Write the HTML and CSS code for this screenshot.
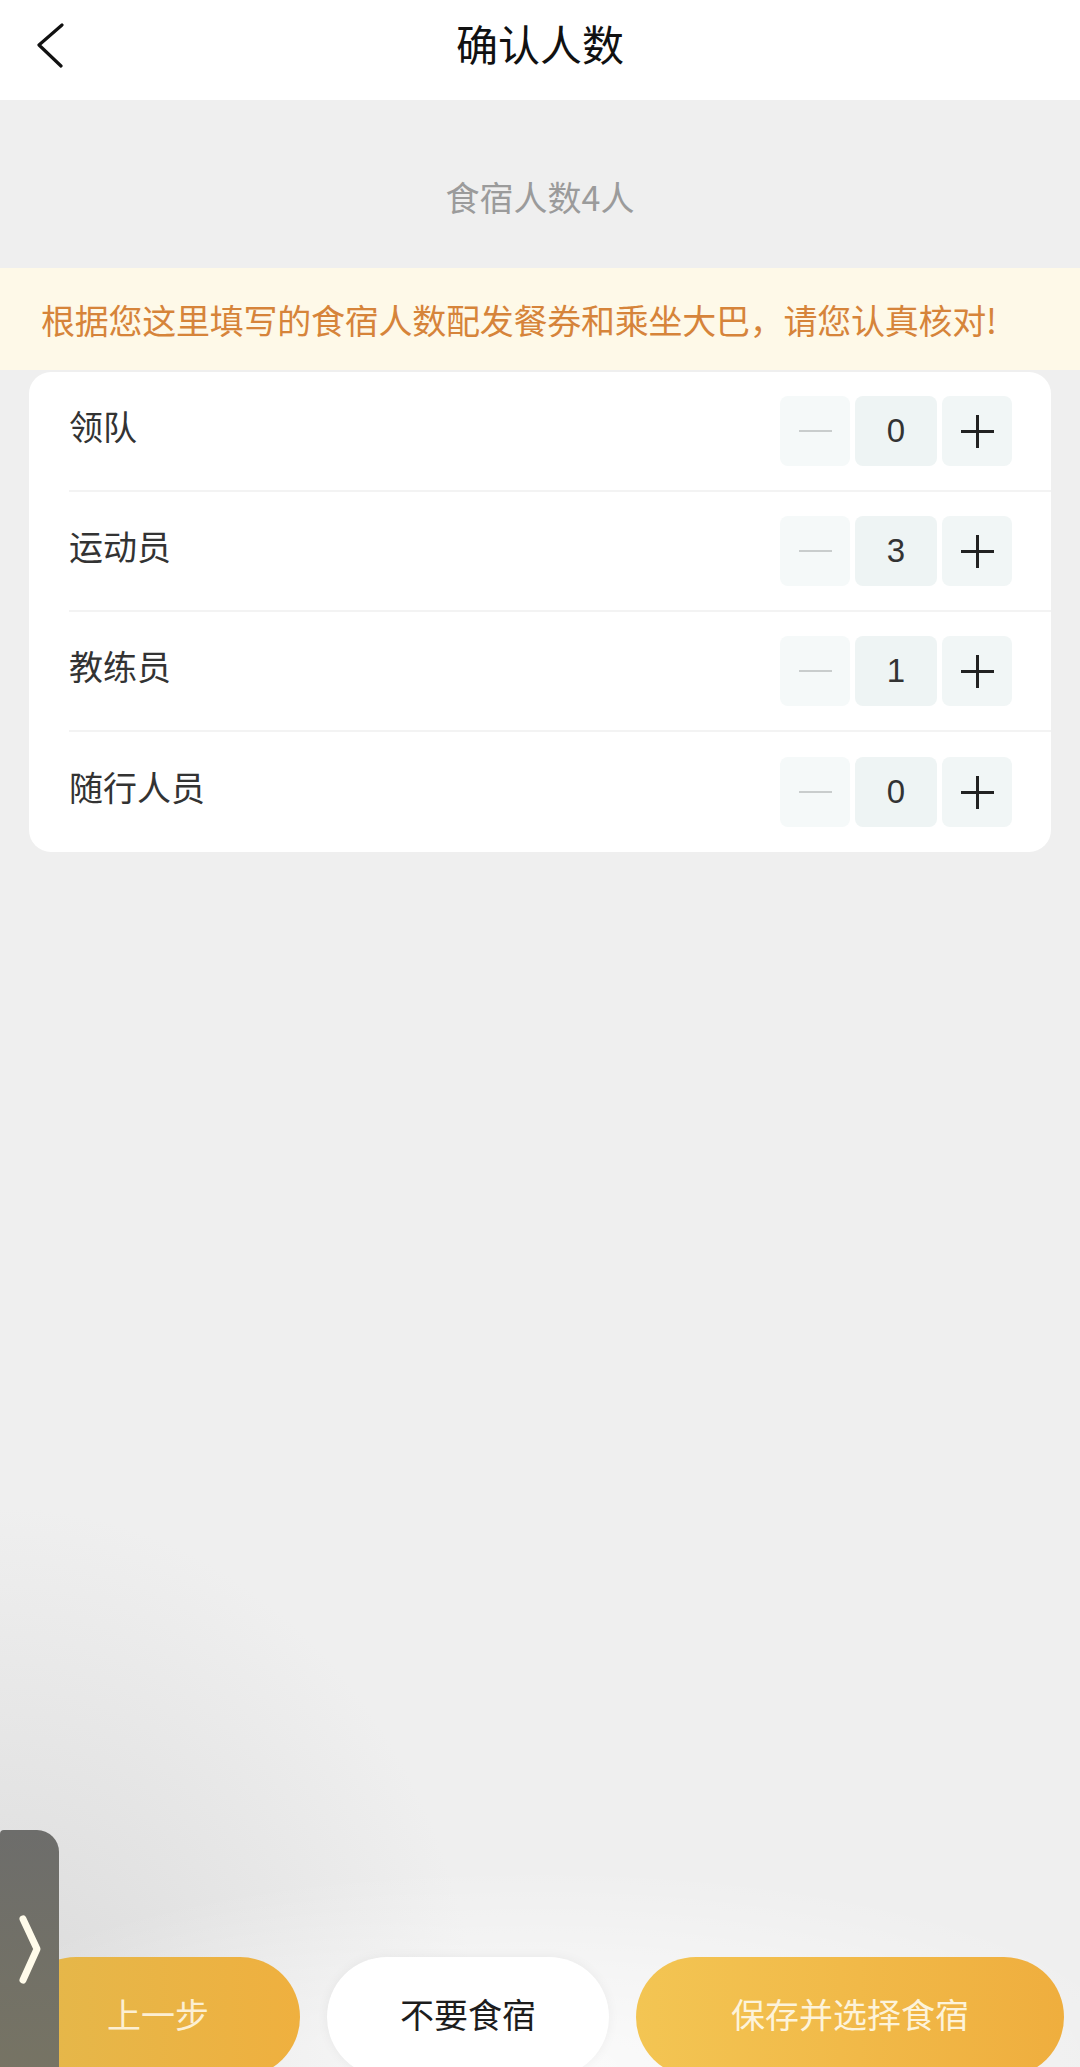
FILE: index.html
```html
<!DOCTYPE html>
<html>
  <head>
    <meta charset="utf-8" />
    <title>确认人数</title>
    <link rel="stylesheet" href="styles.css">
  </head>
  <body>
    <div class="page">
      <header class="nav">
        <div class="nav-back">
          <svg width="30" height="46" viewBox="0 0 30 46">
            <path d="M26 2 L3 22 L25 43" fill="none" stroke="#111" stroke-width="3.2" stroke-linecap="round" stroke-linejoin="round" />
          </svg>
        </div>
        <h1 class="nav-title">确认人数</h1>
        <div></div>
      </header>

      <div class="summary">食宿人数4人</div>

      <div class="notice">根据您这里填写的食宿人数配发餐券和乘坐大巴，请您认真核对!</div>

      <main class="content">
        <div class="card">
          <div class="row">
            <span class="row-label">领队</span>
            <div class="stepper">
              <span class="step step-minus"><i class="minus"></i></span>
              <span class="step-value">0</span>
              <span class="step step-plus"><i class="plus"></i></span>
            </div>
          </div>
          <div class="row">
            <span class="row-label">运动员</span>
            <div class="stepper">
              <span class="step step-minus"><i class="minus"></i></span>
              <span class="step-value">3</span>
              <span class="step step-plus"><i class="plus"></i></span>
            </div>
          </div>
          <div class="row">
            <span class="row-label">教练员</span>
            <div class="stepper">
              <span class="step step-minus"><i class="minus"></i></span>
              <span class="step-value">1</span>
              <span class="step step-plus"><i class="plus"></i></span>
            </div>
          </div>
          <div class="row">
            <span class="row-label">随行人员</span>
            <div class="stepper">
              <span class="step step-minus"><i class="minus"></i></span>
              <span class="step-value">0</span>
              <span class="step step-plus"><i class="plus"></i></span>
            </div>
          </div>
        </div>
      </main>

      <footer class="actions">
        <button class="btn btn-prev">上一步</button>
        <button class="btn btn-skip">不要食宿</button>
        <button class="btn btn-save">保存并选择食宿</button>
      </footer>

      <div class="side-tab">
        <svg width="26" height="72" viewBox="0 0 26 72">
          <path d="M6 5 L20 35 L6 66" fill="none" stroke="#fffbea" stroke-width="7" stroke-linecap="round" stroke-linejoin="round" />
        </svg>
      </div>
    </div>
  </body>
</html>
```

FILE: styles.css
```css
body {
  margin: 0;
  font-family: "Noto Sans CJK SC", "Noto Sans", sans-serif;
  background-color: #efefef;
}
.page {
  position: relative;
  height: 100vh;
  display: flex;
  flex-direction: column;
  overflow: hidden;
  background:
    radial-gradient(ellipse 620px 200px at 50% 100%, rgba(255, 255, 255, 0.75), rgba(255, 255, 255, 0)),
    radial-gradient(ellipse 480px 560px at 0 100%, #d9d9d9, rgba(239, 239, 239, 0)),
    #efefef;
}

/* top bar */
.nav {
  height: 100px;
  flex-shrink: 0;
  background-color: #fff;
  display: grid;
  grid-template-columns: 100px 1fr 100px;
  align-items: center;
}
.nav-back {
  padding-left: 36px;
  padding-bottom: 8px;
  display: flex;
}
.nav-title {
  margin: 0;
  padding-bottom: 14px;
  text-align: center;
  font-size: 42px;
  font-weight: 400;
  color: #111;
  line-height: 50px;
}

.summary {
  flex-shrink: 0;
  height: 168px;
  box-sizing: border-box;
  padding-top: 76px;
  text-align: center;
  font-size: 34px;
  line-height: 42px;
  color: #9b9b9b;
}
.notice {
  flex-shrink: 0;
  height: 102px;
  box-sizing: border-box;
  padding-left: 41px;
  display: flex;
  align-items: center;
  background-color: #fef9e8;
  font-size: 34px;
  letter-spacing: -0.25px;
  color: #d6843a;
  white-space: nowrap;
}

/* people card */
.content {
  flex: 1;
  padding: 2px 29px 0;
}
.card {
  background-color: #fff;
  border-radius: 22px;
  overflow: hidden;
}
.row {
  height: 120px;
  box-sizing: border-box;
  margin-left: 40px;
  padding-right: 39px;
  display: flex;
  align-items: center;
  justify-content: space-between;
  border-bottom: 2px solid #f3f3f3;
}
.row:last-child {
  border-bottom: 0;
}
.row-label {
  font-size: 34px;
  color: #333;
  padding-bottom: 12px;
}
.stepper {
  display: flex;
  gap: 5px;
}
.step,
.step-value {
  height: 70px;
  display: flex;
  align-items: center;
  justify-content: center;
  border-radius: 8px;
}
.step {
  width: 70px;
}
.step-minus {
  background-color: #f5f9f9;
}
.step-plus {
  background-color: #f1f6f6;
}
.step-value {
  width: 82px;
  background-color: #eef4f4;
  font-family: "Liberation Sans", Arial, sans-serif;
  font-size: 33px;
  color: #333;
}
.minus {
  width: 33px;
  height: 2px;
  background-color: #c9cdcd;
}
.plus {
  position: relative;
  width: 33px;
  height: 33px;
}
.plus:before,
.plus:after {
  content: "";
  position: absolute;
  background-color: #222;
}
.plus:before {
  left: 0;
  right: 0;
  top: 15px;
  height: 3px;
}
.plus:after {
  top: 0;
  bottom: 0;
  left: 15px;
  width: 3px;
}

/* bottom buttons */
.actions {
  flex-shrink: 0;
  height: 110px;
  padding: 0 16px;
  display: flex;
  gap: 27px;
  align-items: flex-start;
}
.btn {
  height: 120px;
  border: 0;
  border-radius: 60px;
  font-family: inherit;
  font-size: 34px;
  padding: 0 0 8px;
  flex-shrink: 0;
}
.btn-prev {
  width: 284px;
  color: #fcefd3;
  background: linear-gradient(90deg, #e4b84b, #efb03f);
}
.btn-skip {
  width: 282px;
  color: #1d1d1d;
  background-color: #fff;
  box-shadow: 0 0 12px rgba(0, 0, 0, 0.05);
}
.btn-save {
  flex: 1;
  color: #fdf3da;
  background: linear-gradient(90deg, #f3c553, #efae3e);
}

/* floating side handle */
.side-tab {
  position: absolute;
  left: 0;
  top: 1830px;
  width: 59px;
  height: 260px;
  border-radius: 4px 22px 0 0;
  background: linear-gradient(180deg, #6d6d6b, #777463);
  display: flex;
  justify-content: center;
  padding-top: 84px;
  box-sizing: border-box;
}
```
